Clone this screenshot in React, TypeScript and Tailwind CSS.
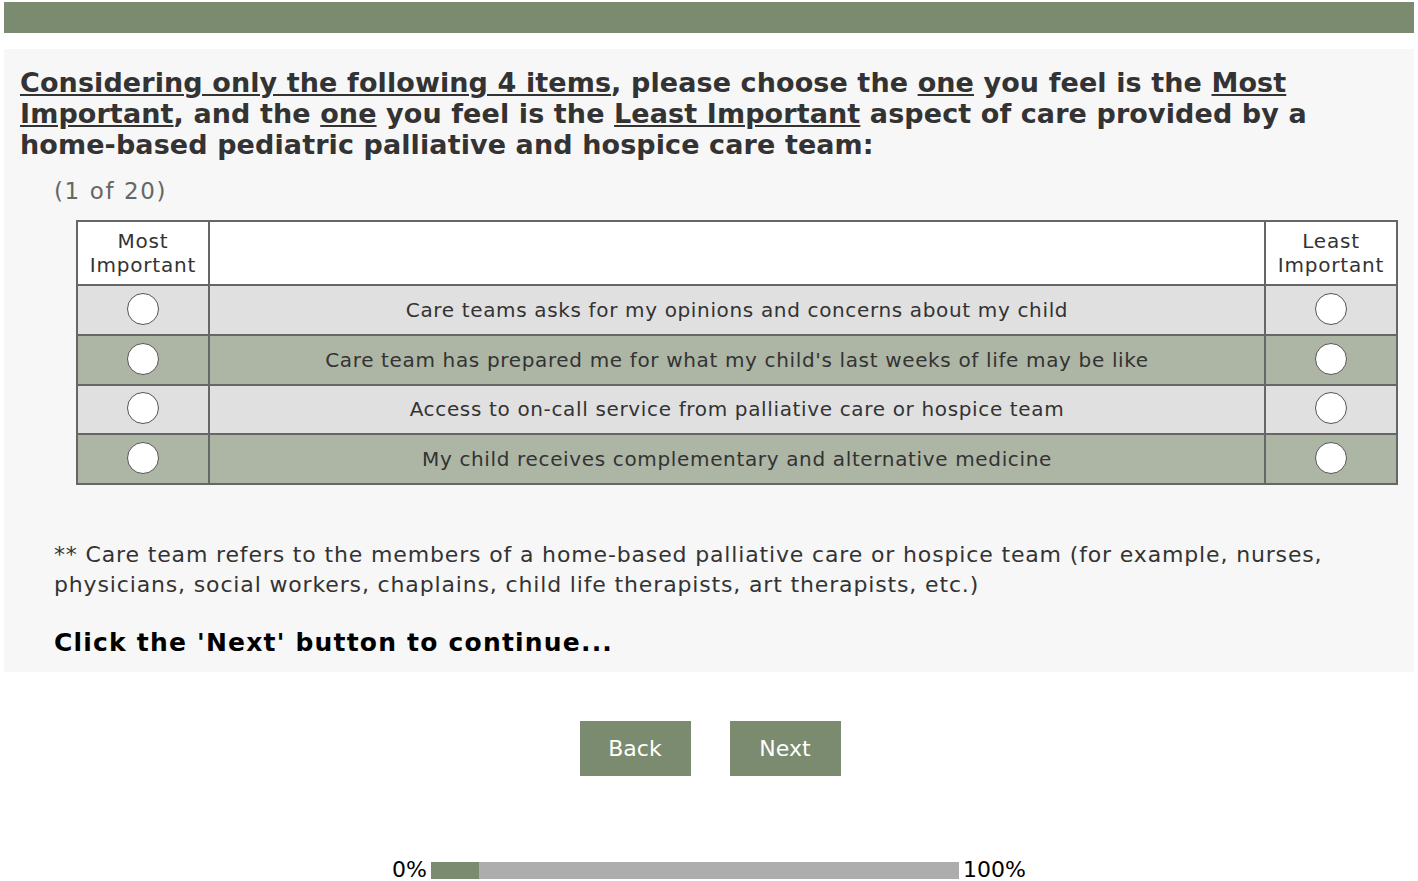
import React from "react";

// Best–worst scaling survey page: pick most / least important of 4 items.

const items = [
  "Care teams asks for my opinions and concerns about my child",
  "Care team has prepared me for what my child's last weeks of life may be like",
  "Access to on-call service from palliative care or hospice team",
  "My child receives complementary and alternative medicine",
];

function Radio() {
  return (
    <span className="inline-block w-[32px] h-[32px] rounded-full bg-white border-[1.5px] border-[#555]" />
  );
}

export default function App() {
  return (
    <div className="w-[1418px] h-[881px] bg-white overflow-hidden text-[#333]" style={{ fontFamily: '"DejaVu Sans", Verdana, sans-serif' }}>
      {/* header bar */}
      <div className="mx-[4px] mt-[2px] h-[31px] bg-[#7a8b70]" />

      {/* question panel */}
      <div className="mx-[4px] mt-[16px] h-[623px] bg-[#f7f7f7] pt-[18px]">
        <h1 className="pl-[16px] pr-[20px] text-[27px] leading-[31px] font-bold tracking-[0.1px] text-[#333]">
          <u>Considering only the following 4 items</u>, please choose the <u>one</u> you feel is the <u>Most Important</u>, and the <u>one</u> you feel is the <u>Least Important</u> aspect of care provided by a <span className="whitespace-nowrap">home-based</span> pediatric palliative and hospice care team:
        </h1>

        <div className="pl-[50px] mt-[16px] text-[23px] leading-[30px] tracking-[1.6px] text-[#666]">(1 of 20)</div>

        <table className="ml-[72px] mt-[14px] w-[1322px] border-collapse">
          <thead>
            <tr className="h-[64px] bg-white">
              <th className="w-[132px] border-2 border-[#666] font-normal leading-[24px] text-[20px] tracking-[0.8px]">Most<br />Important</th>
              <th className="border-2 border-[#666]" />
              <th className="w-[132px] border-2 border-[#666] font-normal leading-[24px] text-[20px] tracking-[0.8px]">Least<br />Important</th>
            </tr>
          </thead>
          <tbody>
            {items.map((t, i) => (
              <tr key={i} className={`h-[49.75px] ${i % 2 === 0 ? "bg-[#e0e0e0]" : "bg-[#adb5a5]"}`}>
                <td className="border-2 border-[#666] text-center align-middle pt-[5px]"><Radio /></td>
                <td className="border-2 border-[#666] text-center text-[20px] tracking-[0.65px]">{t}</td>
                <td className="border-2 border-[#666] text-center align-middle pt-[5px]"><Radio /></td>
              </tr>
            ))}
          </tbody>
        </table>

        <p className="pl-[50px] pr-[60px] mt-[55px] text-[22px] leading-[30px] tracking-[0.85px]">
          ** Care team refers to the members of a home-based palliative care or hospice team (for example, nurses, physicians, social workers, chaplains, child life therapists, art therapists, etc.)
        </p>

        <p className="pl-[50px] mt-[28px] text-[25px] leading-[30px] font-bold text-black tracking-[1.2px]">Click the 'Next' button to continue...</p>
      </div>

      {/* nav buttons */}
      <div className="flex justify-center gap-[39px] mt-[49px] pl-[2px]">
        <button className="w-[111px] h-[55px] bg-[#7a8b70] text-white text-[22px]">Back</button>
        <button className="w-[111px] h-[55px] bg-[#7a8b70] text-white text-[22px]">Next</button>
      </div>

      {/* progress */}
      <div className="flex items-center justify-center mt-[83px] gap-[4px] text-[22px] leading-[22px] text-black">
        <span>0%</span>
        <div className="w-[528px] h-[17px] bg-[#adadad] flex">
          <div className="h-full bg-[#7a8b70]" style={{ width: "9%" }} />
        </div>
        <span>100%</span>
      </div>
    </div>
  );
}
